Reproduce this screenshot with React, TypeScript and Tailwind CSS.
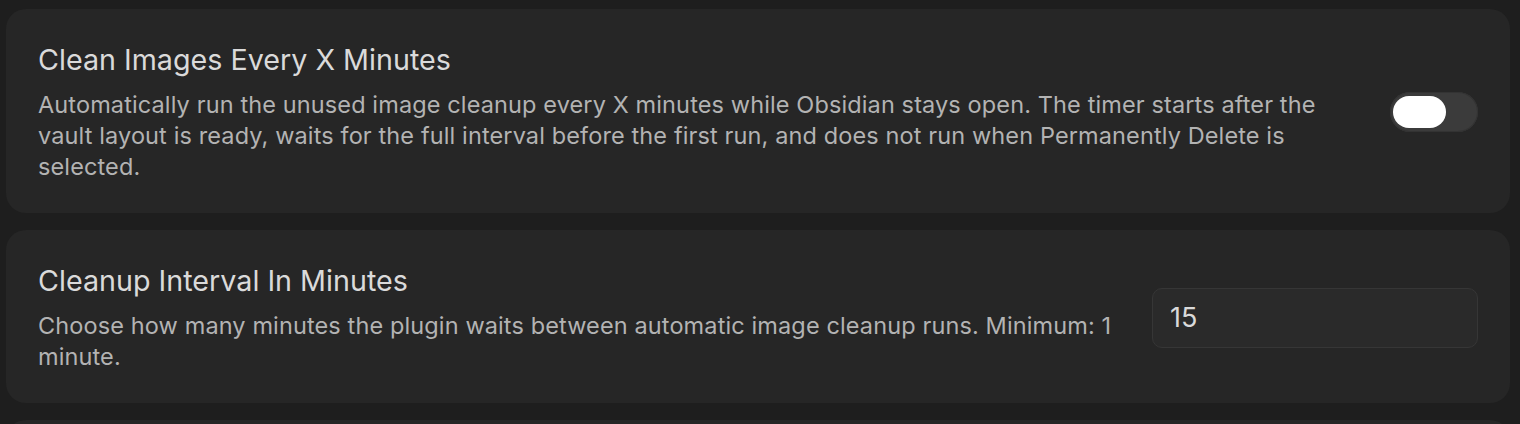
import { useState } from "react";

function Toggle({ on, onChange }: { on: boolean; onChange: (v: boolean) => void }) {
  return (
    <button
      type="button"
      onClick={() => onChange(!on)}
      className="relative h-[40px] w-[88px] shrink-0 rounded-full bg-[#3b3b3b] shadow-[inset_0_0_0_1px_#333333]"
    >
      <span
        className={
          on
            ? "absolute top-[4px] right-[3px] h-[32px] w-[53px] rounded-full bg-white"
            : "absolute top-[4px] left-[3px] h-[32px] w-[53px] rounded-full bg-white"
        }
      />
    </button>
  );
}

function SettingItem({
  name,
  desc,
  children,
}: {
  name: string;
  desc: string;
  children: React.ReactNode;
}) {
  return (
    <div className="flex items-center rounded-[20px] bg-[#262626] px-[32px] pt-[33px] pb-[31px]">
      <div className="mr-[24px] flex-1">
        <div className="text-[28.7px] leading-[36px] text-[#dadada]">{name}</div>
        <div className="mt-[11px] text-[23.5px] leading-[31px] tracking-[0.12px] text-[#b3b3b3]">
          {desc}
        </div>
      </div>
      {children}
    </div>
  );
}

export default function App() {
  const [autoClean, setAutoClean] = useState(false);
  const [interval, setInterval] = useState("15");

  return (
    <div
      className="flex h-[424px] flex-col gap-[17px] overflow-hidden bg-[#1e1e1e] pt-[9px] pr-[10px] pl-[6px]"
      style={{ fontFamily: 'Inter, "Noto Sans", sans-serif' }}
    >
      <SettingItem
        name="Clean Images Every X Minutes"
        desc="Automatically run the unused image cleanup every X minutes while Obsidian stays open. The timer starts after the vault layout is ready, waits for the full interval before the first run, and does not run when Permanently Delete is selected."
      >
        <Toggle on={autoClean} onChange={setAutoClean} />
      </SettingItem>
      <SettingItem
        name="Cleanup Interval In Minutes"
        desc="Choose how many minutes the plugin waits between automatic image cleanup runs. Minimum: 1 minute."
      >
        <input
          value={interval}
          onChange={(e) => setInterval(e.target.value)}
          className="h-[60px] w-[326px] shrink-0 rounded-[10px] border border-[#363636] bg-[#2a2a2a] px-[17px] text-[27px] text-[#dadada] outline-none"
        />
      </SettingItem>
      <div className="h-[60px] shrink-0 rounded-[20px] bg-[#262626]" />
    </div>
  );
}
